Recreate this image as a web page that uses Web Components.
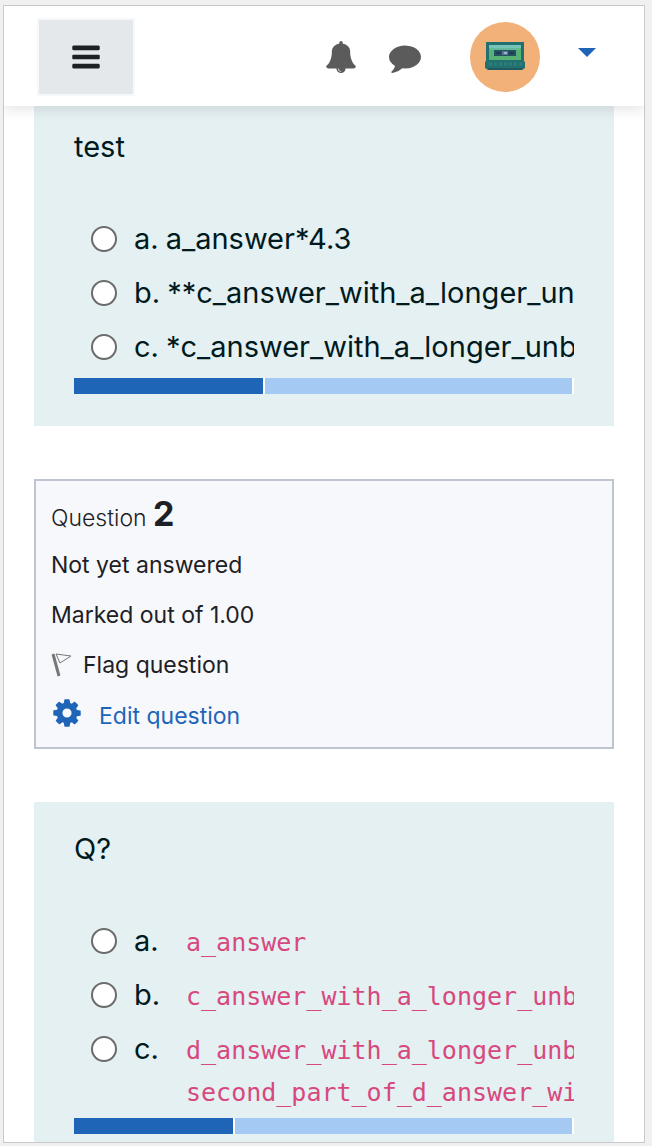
<!DOCTYPE html>
<html lang="en">
<head>
<meta charset="utf-8">
<meta name="viewport" content="width=device-width, initial-scale=1">
<title>Quiz attempt</title>
<style>
    body {
        margin: 0;
        background: #f0f0f0;
        font-family: Inter, "Liberation Sans", sans-serif;
        color: #1d2125;
    }
</style>
</head>
<body>
<quiz-page>
    <nav-bar slot="header"></nav-bar>

    <question-card name="q1" thumb="38">
        <span slot="text">test</span>
        <answer-option name="q1" number="a.">a_answer*4.3</answer-option>
        <answer-option name="q1" number="b.">**c_answer_with_a_longer_un</answer-option>
        <answer-option name="q1" number="c.">*c_answer_with_a_longer_unb</answer-option>
    </question-card>

    <question-info number="2" state="Not yet answered" grade="Marked out of 1.00"></question-info>

    <question-card name="q2" thumb="32">
        <span slot="text">Q?</span>
        <answer-option code name="q2" number="a.">a_answer</answer-option>
        <answer-option code name="q2" number="b.">c_answer_with_a_longer_unb</answer-option>
        <answer-option code name="q2" number="c.">d_answer_with_a_longer_unb<br>second_part_of_d_answer_wi</answer-option>
    </question-card>
</quiz-page>

<script>
class QuizPage extends HTMLElement {

    constructor() {
        super();
        this.shadowDOM = this.attachShadow({mode: "open"});
    }

    connectedCallback() {
        this.shadowDOM.innerHTML = `
        <style>
        :host {
            display: flex;
            box-sizing: border-box;
            height: 100vh;
            padding: 5px 7px 3px 3px;
        }

        .frame {
            flex: 1;
            min-width: 0;
            display: flex;
            flex-direction: column;
            overflow: hidden;
            border: 1px solid #c8c8c8;
            background: white;
        }

        main {
            flex: 1;
            min-height: 0;
            overflow: hidden;
            display: flex;
            flex-direction: column;
            gap: 53px;
            padding: 0 30px;
        }
        </style>
        <div class="frame">
            <slot name="header"></slot>
            <main><slot></slot></main>
        </div>
        `;
    }
}

class NavBar extends HTMLElement {

    constructor() {
        super();
        this.shadowDOM = this.attachShadow({mode: "open"});
    }

    connectedCallback() {
        this.shadowDOM.innerHTML = `
        <style>
        :host {
            display: block;
            position: relative;
            z-index: 1;
            flex: none;
            background: white;
            box-shadow: 0 4px 12px rgba(0, 0, 0, 0.1);
        }

        header {
            display: flex;
            align-items: center;
            box-sizing: border-box;
            height: 100px;
            padding: 2px 48px 0 33px;
        }

        button {
            display: flex;
            align-items: center;
            justify-content: center;
            padding: 0;
            border: 0;
            background: none;
            color: #5b5b5b;
            cursor: pointer;
        }

        .drawer {
            width: 98px;
            height: 78px;
            margin-right: auto;
            border: 2px solid #f5f7fa;
            background: #e4e8eb;
            color: #1d2125;
        }

        .bell {
            margin-right: 32px;
        }

        .chat {
            margin-right: 49px;
        }

        .user {
            gap: 38px;
        }

        .icon {
            width: 32px;
            height: 32px;
            fill: currentColor;
        }

        .avatar {
            width: 70px;
            height: 70px;
        }

        .caret {
            width: 18px;
            height: 9px;
            margin-bottom: 9px;
            fill: #1e65b8;
        }
        </style>
        <header>
            <button class="drawer" type="button" aria-label="Side panel" aria-expanded="false">
                <svg class="icon" viewBox="0 0 1792 1792"><path d="M1664 1344v128q0 26-19 45t-45 19h-1408q-26 0-45-19t-19-45v-128q0-26 19-45t45-19h1408q26 0 45 19t19 45zm0-512v128q0 26-19 45t-45 19h-1408q-26 0-45-19t-19-45v-128q0-26 19-45t45-19h1408q26 0 45 19t19 45zm0-512v128q0 26-19 45t-45 19h-1408q-26 0-45-19t-19-45v-128q0-26 19-45t45-19h1408q26 0 45 19t19 45z"/></svg>
            </button>
            <button class="bell" type="button" aria-label="Notifications">
                <svg class="icon" viewBox="0 0 1792 1792"><path d="M912 1696q0-16-16-16-59 0-101.500-42.500t-42.500-101.500q0-16-16-16t-16 16q0 73 51.500 124.500t124.500 51.500q16 0 16-16zm816-288q0 52-38 90t-90 38h-448q0 106-75 181t-181 75-181-75-75-181h-448q-52 0-90-38t-38-90q50-42 91-88t85-119.500 74.500-158.500 50-206 19.500-260q0-152 117-282.500t307-158.500q-8-19-8-39 0-40 28-68t68-28 68 28 28 68q0 20-8 39 190 28 307 158.500t117 282.500q0 139 19.500 260t50 206 74.500 158.500 85 119.500 91 88z"/></svg>
            </button>
            <button class="chat" type="button" aria-label="Messages">
                <svg class="icon" viewBox="0 0 1792 1792"><path d="M1792 896q0 174-120 321.500t-326 233-450 85.500q-70 0-145-8-198 175-460 242-49 14-114 22-17 2-30.500-9t-17.500-29v-1q-3-4-.5-12t2-10 4.500-9.500l6-9 7-8.500 8-9q7-8 31-34.500t34.500-38 31-39.500 32.500-51 27-59 26-76q-157-89-247.500-220t-90.500-281q0-130 71-248.500t191-204.500 286-136.500 348-50.500q244 0 450 85.500t326 233 120 321.500z"/></svg>
            </button>
            <button class="user" type="button" aria-label="User menu">
                <svg class="avatar" viewBox="0 0 70 70">
                    <circle cx="35" cy="35" r="35" fill="#f2b179"/>
                    <path d="M16 20H54V39L55 40V46L52 48H18L15 46V40L16 39Z" fill="#22706f"/>
                    <path d="M19 23H51V38H19Z" fill="#58b174"/>
                    <path d="M19 23H51V26H19Z" fill="#76c3b9"/>
                    <path d="M20 26H50V28H20Z" fill="#63b999"/>
                    <path d="M24 28H46V34H24Z" fill="#24515f"/>
                    <path d="M26 30H31V32H26ZM39 30H44V32H39Z" fill="#1d3f55"/>
                    <path d="M32 29H38V33H32Z" fill="#5b7595"/>
                    <path d="M34 30H37V32H34Z" fill="#a5b2cc"/>
                    <path d="M19 42H52" stroke="#2b8078" stroke-width="3" stroke-dasharray="3 2"/>
                    <path d="M18 47H52" stroke="#1f5a60" stroke-width="2"/>
                </svg>
                <svg class="caret" viewBox="0 0 18 9"><path d="M0 0H18L9 9Z"/></svg>
            </button>
        </header>
        `;
    }
}

class QuestionCard extends HTMLElement {

    constructor() {
        super();
        this.shadowDOM = this.attachShadow({mode: "open"});
    }

    connectedCallback() {
        const thumb = this.getAttribute("thumb");

        this.shadowDOM.innerHTML = `
        <style>
        :host {
            display: block;
            flex: none;
            padding: 26px 40px 32px;
            background: #e5f0f2;
            color: #001a1e;
            font-size: 29px;
            line-height: 42px;
        }

        :host(:first-of-type) {
            margin-top: -6px;
        }

        fieldset {
            min-width: 0;
            margin: 0;
            padding: 0;
            border: 0;
        }

        legend {
            padding: 0;
            margin-bottom: 44px;
        }

        .answers {
            overflow: hidden;
        }

        .scroll {
            display: flex;
            gap: 2px;
            height: 16px;
            margin-top: 4px;
            padding-right: 2px;
            background: white;
        }

        .thumb {
            flex: none;
            width: ${thumb}%;
            background: #1e65b8;
        }

        .track {
            flex: 1;
            background: #a4caf4;
        }
        </style>
        <fieldset>
            <legend><slot name="text"></slot></legend>
            <div class="answers"><slot></slot></div>
        </fieldset>
        <div class="scroll"><div class="thumb"></div><div class="track"></div></div>
        `;
    }
}

class AnswerOption extends HTMLElement {

    constructor() {
        super();
        this.shadowDOM = this.attachShadow({mode: "open"});
    }

    connectedCallback() {
        const number = this.getAttribute("number");
        const name = this.getAttribute("name");

        this.shadowDOM.innerHTML = `
        <style>
        :host {
            display: flex;
            align-items: flex-start;
            padding: 6px 0 6px 17px;
            white-space: nowrap;
        }

        :host([code]) {
            padding-bottom: 4px;
        }

        :host([code]:last-of-type) {
            padding-bottom: 0;
        }

        input {
            appearance: none;
            flex: none;
            box-sizing: border-box;
            width: 26px;
            height: 26px;
            margin: 8px 17px 0 0;
            border: 2px solid #6b6b6b;
            border-radius: 50%;
            background: white;
        }

        input:checked {
            border-width: 8px;
            border-color: #1e65b8;
        }

        label {
            display: flex;
            gap: 7px;
        }

        :host([code]) label {
            gap: 0;
        }

        :host([code]) .number {
            width: 52px;
        }

        :host([code]) .text {
            padding-top: 2px;
            color: #d7487f;
            font-family: "DejaVu Sans Mono", monospace;
            font-size: 25px;
        }
        </style>
        <input type="radio" id="answer" name="${name}">
        <label for="answer"><span class="number">${number}</span><span class="text"><slot></slot></span></label>
        `;
    }
}

class QuestionInfo extends HTMLElement {

    constructor() {
        super();
        this.shadowDOM = this.attachShadow({mode: "open"});
    }

    connectedCallback() {
        this.shadowDOM.innerHTML = `
        <style>
        :host {
            display: block;
            flex: none;
            padding: 12px 15px 12px;
            border: 2px solid #bfc5d0;
            background: #f7f8fb;
            font-size: 23px;
            line-height: 36px;
        }

        h3 {
            margin: 0 0 8px;
            font-size: 23px;
            font-weight: 300;
            line-height: 42px;
        }

        h3 span {
            font-size: 34px;
            font-weight: 700;
        }

        .state,
        .grade,
        .flag {
            margin-bottom: 14px;
        }

        .flag,
        a {
            display: flex;
            align-items: center;
        }

        .flag {
            padding: 0;
            border: 0;
            background: none;
            color: inherit;
            font: inherit;
            gap: 8px;
            cursor: pointer;
        }

        .flag svg {
            width: 24px;
            height: 26px;
        }

        a {
            gap: 16px;
            color: #1e65b8;
            text-decoration: none;
        }

        a svg {
            width: 32px;
            height: 32px;
            margin-bottom: 6px;
            fill: currentColor;
        }
        </style>
        <h3>Question <span>${this.getAttribute("number")}</span></h3>
        <div class="state">${this.getAttribute("state")}</div>
        <div class="grade">${this.getAttribute("grade")}</div>
        <button class="flag" type="button">
            <svg viewBox="0 0 24 26" fill="none"><path d="M2 2L8 24" stroke="#777" stroke-width="3"/><path d="M5 2L20 4L9 11Z" stroke="#777" stroke-width="1"/></svg>
            Flag question
        </button>
        <a href="#edit">
            <svg viewBox="0 0 1792 1792"><path d="M1152 896q0-106-75-181t-181-75-181 75-75 181 75 181 181 75 181-75 75-181zm512-109v222q0 12-8 23t-20 13l-185 28q-19 54-39 91 35 50 107 138 10 12 10 25t-9 23q-27 37-99 108t-94 71q-12 0-26-9l-138-108q-44 23-91 38-16 136-29 186-7 28-36 28h-222q-14 0-24.500-8.500t-11.500-21.500l-28-184q-49-16-90-37l-141 107q-10 9-25 9-14 0-25-11-126-114-165-168-7-10-7-23 0-12 8-23 15-21 51-66.500t54-70.500q-27-50-41-99l-183-27q-13-2-21-12.500t-8-23.500v-222q0-12 8-23t19-13l186-28q14-46 39-92-40-57-107-138-10-12-10-24 0-10 9-23 26-36 98.500-107.500t94.500-71.500q13 0 26 10l138 107q44-23 91-38 16-136 29-186 7-28 36-28h222q14 0 24.500 8.500t11.500 21.500l28 184q49 16 90 37l142-107q9-9 24-9 13 0 25 10 129 119 165 170 7 8 7 22 0 12-8 23-15 21-51 66.500t-54 70.500q26 50 41 98l183 28q13 2 21 12.500t8 23.500z"/></svg>
            Edit question
        </a>
        `;
    }
}

customElements.define("quiz-page", QuizPage);
customElements.define("nav-bar", NavBar);
customElements.define("question-card", QuestionCard);
customElements.define("answer-option", AnswerOption);
customElements.define("question-info", QuestionInfo);
</script>
</body>
</html>
